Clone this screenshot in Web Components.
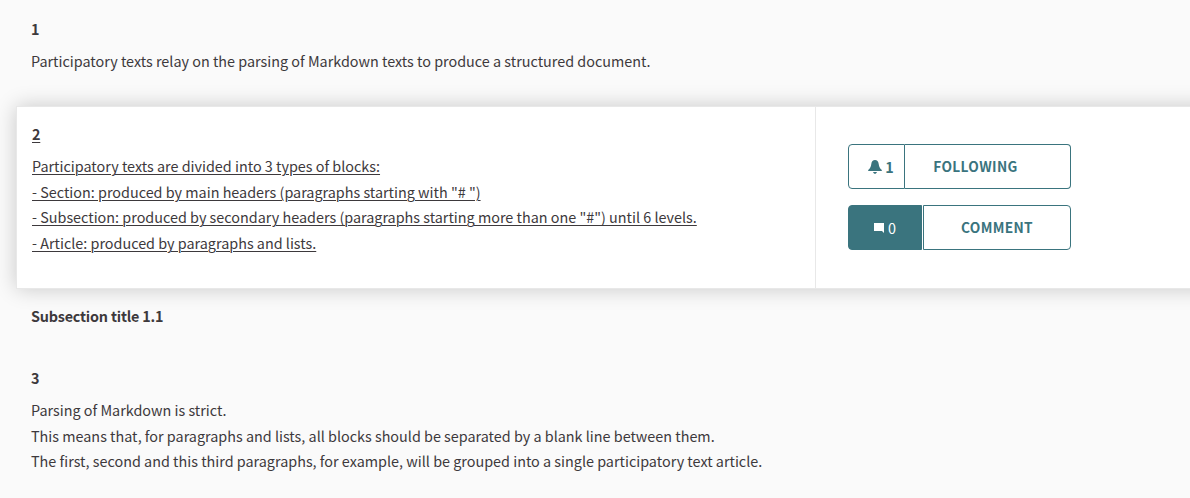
<!DOCTYPE html>
<html lang="en">
<head>
<meta charset="utf-8">
<title>Participatory text</title>
<style>
html,body{margin:0;height:100%;overflow:hidden}
body{background:#fafafa;color:#3d393c;font-family:"Source Sans Pro","Noto Sans CJK SC",sans-serif;font-size:14.39px;line-height:25.6px}
</style>
</head>
<body>
<participatory-text></participatory-text>
<script>
const define = (name, html) => {
  const template = document.createElement('template');
  template.innerHTML = html;
  customElements.define(name, class extends HTMLElement {
    constructor() {
      super();
      this.attachShadow({mode: 'open'}).append(template.content.cloneNode(true));
    }
  });
};

define('text-title', `<style>
:host{display:block;font-weight:600;letter-spacing:-.2px;line-height:22px;height:22px}
</style><slot></slot>`);

define('text-line', `<style>
:host{display:block;white-space:pre;width:max-content}
</style><slot></slot>`);

define('text-article', `<style>
:host{display:block;box-sizing:border-box;padding:18px 31px 0}
.body{margin-top:8.2px}
</style><slot name="title"></slot><div class="body"><slot></slot></div>`);

define('active-article', `<style>
:host{display:grid;grid-template-columns:798px 1fr;box-sizing:border-box;height:183px;margin:0 -30px 0 16px;border:1px solid #e8e8e8;background:#fff;box-shadow:0 0 20px rgba(0,0,0,.2)}
.text{padding:16px 15px 0;text-decoration:underline;text-decoration-thickness:1px;text-underline-offset:2px}
.body{margin-top:8.2px}
.actions{border-left:1px solid #e8e8e8;padding:37px 0 0 32px;display:flex;flex-direction:column;gap:16px}
</style><div class="text"><slot name="title"></slot><div class="body"><slot></slot></div></div><div class="actions"><slot name="actions"></slot></div>`);

define('action-button', `<style>
:host{display:flex;width:223px;height:45px;color:#3a747e;line-height:41px}
.count,.label{box-sizing:border-box;border:1px solid #3a747e;display:flex;align-items:center;justify-content:center;padding-bottom:1px}
.count{width:57px;border-radius:4px 0 0 4px;font-weight:600;padding-left:9px}
.label{flex:1;border-left:0;border-radius:0 4px 4px 0;font-weight:600;font-size:13.7px;letter-spacing:.36px;padding-right:24px}
:host([filled]) .count{width:74px;background:#3a747e;color:#fff;font-weight:400;margin-right:1px;padding-left:0}
:host([filled]) .label{border-left:1px solid #3a747e;padding-right:0}
</style><div class="count"><slot name="icon"></slot><slot name="count"></slot></div><div class="label"><slot></slot></div>`);

define('bell-icon', `<style>:host{display:block;width:14px;height:15px;margin-right:3px}svg{display:block}</style>
<svg width="14" height="15" viewBox="0 0 14 15" fill="currentColor"><path d="M7 1C4.9 1 3.6 2.5 3.3 5C3 7.7 2.3 9.3 .2 11V12H13.8V11C11.7 9.3 11 7.7 10.7 5C10.4 2.5 9.1 1 7 1ZM5 13H9C8.5 14.2 7.9 14.8 7 14.8S5.5 14.2 5 13Z"/></svg>`);

define('comment-icon', `<style>:host{display:block;width:10px;height:10px;margin:2px 4px 0 0}svg{display:block}</style>
<svg width="10" height="10" viewBox="0 0 10 10" fill="currentColor"><path d="M0 0H10V10L8 8H0Z"/></svg>`);

define('participatory-text', `<style>
:host{display:block}
.first{height:106px}
.section{padding:16px 31px 0;height:44px}
.third{padding-top:17.8px}
</style>
<text-article class="first"><text-title slot="title">1</text-title><text-line>Participatory texts relay on the parsing of Markdown texts to produce a structured document.</text-line></text-article>
<active-article><text-title slot="title">2</text-title>
<text-line>Participatory texts are divided into 3 types of blocks:</text-line>
<text-line>- Section: produced by main headers (paragraphs starting with "# ")</text-line>
<text-line>- Subsection: produced by secondary headers (paragraphs starting more than one "#") until 6 levels.</text-line>
<text-line>- Article: produced by paragraphs and lists.</text-line>
<action-button slot="actions"><bell-icon slot="icon"></bell-icon><span slot="count">1</span>FOLLOWING</action-button>
<action-button slot="actions" filled><comment-icon slot="icon"></comment-icon><span slot="count">0</span>COMMENT</action-button>
</active-article>
<text-title class="section">Subsection title 1.1</text-title>
<text-article class="third"><text-title slot="title">3</text-title>
<text-line>Parsing of Markdown is strict.</text-line>
<text-line>This means that, for paragraphs and lists, all blocks should be separated by a blank line between them.</text-line>
<text-line>The first, second and this third paragraphs, for example, will be grouped into a single participatory text article.</text-line></text-article>`);
</script>
</body>
</html>
